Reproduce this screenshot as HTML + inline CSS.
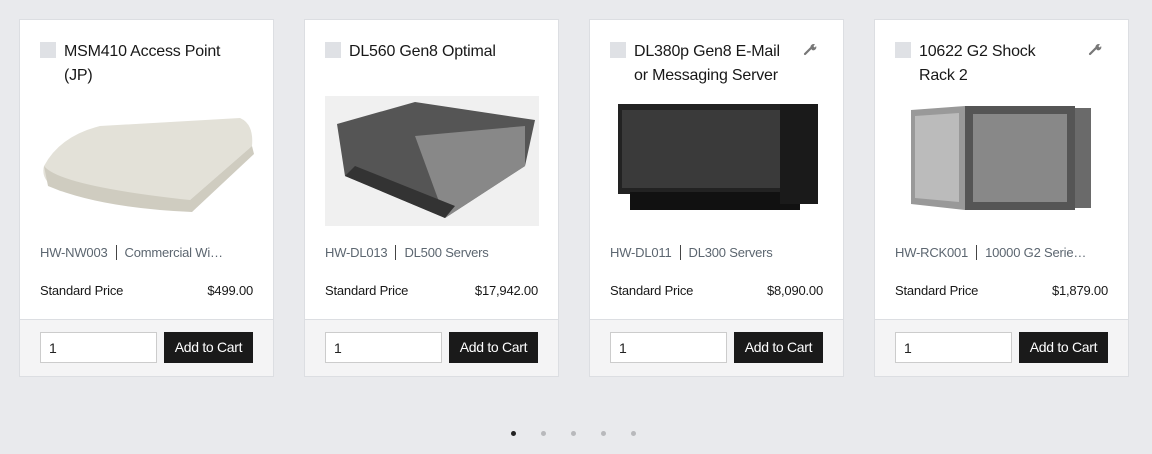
<!DOCTYPE html>
<html><head><style>
*{box-sizing:border-box;margin:0;padding:0}
body{width:1152px;height:454px;background:#e9eaed;font-family:"Liberation Sans",sans-serif;position:relative;overflow:hidden}
.card{position:absolute;top:19px;width:255px;height:358px;background:#fff;border:1px solid #dcdee2}
.cb{position:absolute;left:20px;top:22px;width:16px;height:16px;background:#dfe1e5}
.t{position:absolute;left:44px;top:20px;width:160px;font-size:16px;line-height:24px;color:#181818;letter-spacing:-0.2px}
.w{position:absolute;right:26px;top:22px}
.img{position:absolute;left:20px;top:76px;width:214px;height:130px}
.meta{position:absolute;left:20px;top:225px;font-size:13px;color:#5c6670;white-space:nowrap;letter-spacing:-0.2px}
.meta span{display:inline-block;width:1px;height:15px;background:#444;vertical-align:-3px;margin:0 8px}
.pr{position:absolute;left:20px;right:20px;top:263px;font-size:13px;color:#181818;display:flex;justify-content:space-between;letter-spacing:-0.2px}
.ft{position:absolute;left:0;right:0;bottom:0;height:57px;background:#f4f4f5;border-top:1px solid #dcdee2}
.in{position:absolute;left:20px;top:12px;width:117px;height:31px;background:#fff;border:1px solid #ccc;font-size:14px;padding:7px 8px;color:#222}
.bt{position:absolute;left:144px;top:12px;width:89px;height:31px;background:#1a1a1a;color:#fff;font-size:14px;text-align:center;line-height:31px;letter-spacing:-0.3px}
.dot{position:absolute;top:431px;width:5px;height:5px;border-radius:50%;background:#b8b9bc}
</style></head><body>

<div class="card" style="left:19px">
<div class="cb"></div><div class="t" style="width:175px">MSM410 Access Point (JP)</div>
<div class="img"><svg width="214" height="130"><path d="M4 70 Q20 40 60 30 L200 22 Q214 28 212 50 L150 104 Q100 108 20 95 Q0 85 4 70Z" fill="#e3e1d8"/><path d="M4 70 Q20 90 150 104 L212 50 L214 58 L152 116 Q60 112 8 90Z" fill="#cfccc0"/></svg></div>
<div class="meta">HW-NW003<span></span>Commercial Wi…</div>
<div class="pr"><span>Standard Price</span><span>$499.00</span></div>
<div class="ft"><div class="in">1</div><div class="bt">Add to Cart</div></div>
</div>

<div class="card" style="left:304px">
<div class="cb"></div><div class="t" style="width:175px">DL560 Gen8 Optimal</div>
<div class="img" style="background:#f0f0f0"><svg width="214" height="130"><path d="M12 28 L90 6 L210 24 L200 70 L120 122 L20 80Z" fill="#555"/><path d="M90 40 L200 30 L200 70 L120 122 Z" fill="#888"/><path d="M20 80 L120 122 L130 110 L30 70Z" fill="#333"/></svg></div>
<div class="meta">HW-DL013<span></span>DL500 Servers</div>
<div class="pr"><span>Standard Price</span><span>$17,942.00</span></div>
<div class="ft"><div class="in">1</div><div class="bt">Add to Cart</div></div>
</div>

<div class="card" style="left:589px">
<div class="cb"></div><div class="t">DL380p Gen8 E-Mail or Messaging Server</div>
<svg class="w" width="14" height="14" viewBox="0 0 14 14"><path d="M2 12 L8 6" stroke="#777" stroke-width="2.2" stroke-linecap="round"/><path d="M7.5 5.5 A3 3 0 0 1 12 2.5 L10.5 4 L11 5 L12 5.5 L13 4 A3 3 0 0 1 9 8Z" fill="#777"/></svg>
<div class="img"><svg width="214" height="130"><rect x="8" y="8" width="200" height="90" fill="#222"/><rect x="20" y="96" width="170" height="18" fill="#111"/><rect x="12" y="14" width="160" height="78" fill="#3a3a3a"/><rect x="170" y="8" width="38" height="100" fill="#1a1a1a"/></svg></div>
<div class="meta">HW-DL011<span></span>DL300 Servers</div>
<div class="pr"><span>Standard Price</span><span>$8,090.00</span></div>
<div class="ft"><div class="in">1</div><div class="bt">Add to Cart</div></div>
</div>

<div class="card" style="left:874px">
<div class="cb"></div><div class="t" style="width:135px">10622 G2 Shock Rack 2</div>
<svg class="w" width="14" height="14" viewBox="0 0 14 14"><path d="M2 12 L8 6" stroke="#777" stroke-width="2.2" stroke-linecap="round"/><path d="M7.5 5.5 A3 3 0 0 1 12 2.5 L10.5 4 L11 5 L12 5.5 L13 4 A3 3 0 0 1 9 8Z" fill="#777"/></svg>
<div class="img"><svg width="214" height="130"><rect x="70" y="10" width="110" height="104" fill="#555"/><rect x="78" y="18" width="94" height="88" fill="#888"/><rect x="180" y="12" width="16" height="100" fill="#6a6a6a"/><path d="M16 14 L70 10 L70 114 L16 108Z" fill="#999"/><path d="M20 20 L64 17 L64 106 L20 102Z" fill="#bbb"/></svg></div>
<div class="meta">HW-RCK001<span></span>10000 G2 Serie…</div>
<div class="pr"><span>Standard Price</span><span>$1,879.00</span></div>
<div class="ft"><div class="in">1</div><div class="bt">Add to Cart</div></div>
</div>

<div class="dot" style="left:511px;background:#222"></div>
<div class="dot" style="left:541px"></div>
<div class="dot" style="left:571px"></div>
<div class="dot" style="left:601px"></div>
<div class="dot" style="left:631px"></div>
</body></html>
